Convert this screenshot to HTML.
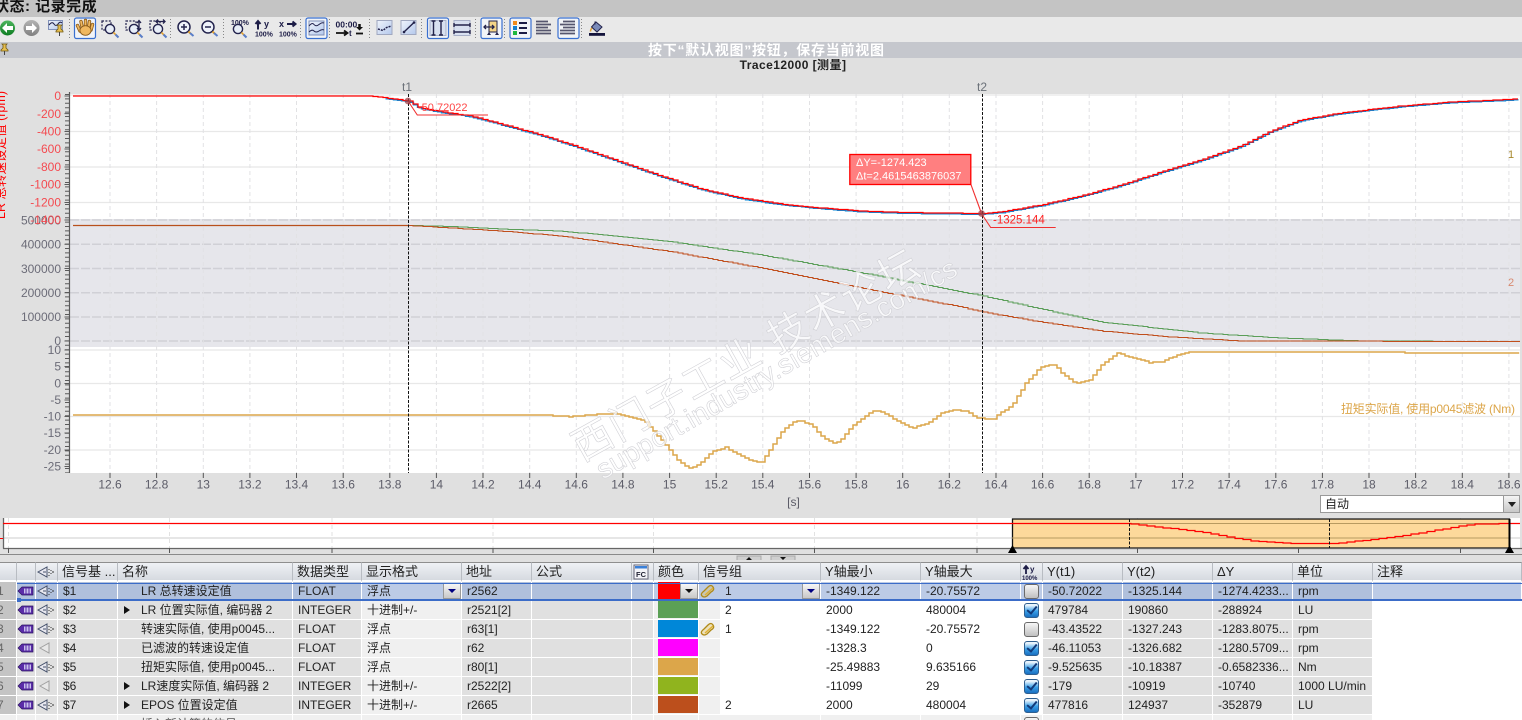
<!DOCTYPE html>
<html lang="zh"><head><meta charset="utf-8"><title>Trace</title>
<style>
html,body{margin:0;padding:0;width:1522px;height:720px;overflow:hidden;background:#e0e0e0;font-family:"Liberation Sans","Noto Sans CJK SC",sans-serif;font-size:12px;color:#222}
#wrap{position:absolute;left:0;top:0;width:1522px;height:720px;overflow:hidden;background:#e0e0e0}
.a{position:absolute}
#top{left:0;top:0;width:1522px;height:17px;background:#c4c4c4;overflow:hidden;font-size:15px;font-weight:bold;color:#111;line-height:13px;white-space:pre;letter-spacing:.5px}
#top span{position:absolute;left:-6px;top:0}
#tb{left:0;top:17px;width:1522px;height:25px;background:#e9e9e9}
#bar{left:0;top:42px;width:1522px;height:16px;background:#c5c7cd;color:#fff;font-weight:bold;font-size:14px;line-height:16px;overflow:hidden}
#bar span{position:absolute;left:648px;top:0;white-space:nowrap;letter-spacing:.75px}
#title{left:593px;top:58px;width:400px;text-align:center;font-weight:bold;font-size:12px;line-height:14px;color:#222;letter-spacing:.45px}
svg{position:absolute;left:0;top:0}
svg text{font-family:"Liberation Sans","Noto Sans CJK SC",sans-serif}
#dd{left:1320px;top:495px;width:198px;height:16px;background:#fff;border:1px solid #9a9a9a;line-height:16px;text-indent:4px}
#dd i{position:absolute;right:0;top:0;width:15px;height:16px;background:linear-gradient(#f4f4f4,#c8c8c8);border-left:1px solid #999}
#dd i:after{content:"";position:absolute;left:4px;top:6px;border:4px solid transparent;border-top:5px solid #222;border-bottom:0}
table{position:absolute;left:0;top:562px;border-collapse:separate;border-spacing:0;table-layout:fixed;width:1522px}
th,td{padding:0;overflow:hidden;white-space:nowrap;border-right:1px solid #fff;border-bottom:1px solid #fff;font-weight:normal;text-align:left;box-sizing:border-box;position:relative}
th{height:20px;line-height:15px;background:linear-gradient(#eff1f5,#d6dae0);border-top:1px solid #8e8e8e;border-right:1px solid #b8bcc2;border-bottom:2px solid #fff;font-size:13px;padding-left:4px;color:#222}
td{height:19px;background:#e0e0e0;padding-left:5px;line-height:18px}
td.e{background:#f0f0f0}
td.w{background:#fff}
td.h{background:#c4c4c4;color:#666;padding:0;text-indent:-3px}
td.g{background:linear-gradient(90deg,#f0f0f0 21px,#fff 21px);padding-left:26px}
td.n{padding-left:23px}
tr.s td{background:#b0c0dc}
tr.s td.e,tr.s td.w,tr.s td.g{background:#bccbe6}
tr.s td.h{background:#c4c4c4}
tr.l td{background:#f0f0f0;color:#555}
.sw{position:absolute;left:4px;top:0;width:40px;height:17px}
.btn{position:absolute;right:0;top:1px;width:18px;height:16px;background:linear-gradient(#f6f6f6,#c8c8c8);border:1px solid #999;box-sizing:border-box}
.btn:after{content:"";position:absolute;left:4px;top:5px;border:4px solid transparent;border-top:4px solid #000080;border-bottom:0}
.btn.k:after{border-top-color:#111}
.cb{position:absolute;left:3px;top:2px;width:15px;height:15px;border:1px solid #6a6a6a;border-radius:3px;box-sizing:border-box;background:linear-gradient(#f6f6f6,#c0c0c0)}
.cb.c{border-color:#2f5f8f;background:linear-gradient(#eaf4fc 10%,#3aa0e8 55%,#1a6fc0)}
.cb.c:after{content:"";position:absolute;left:4px;top:0;width:4px;height:8px;border-right:2.5px solid #123a7a;border-bottom:2.5px solid #123a7a;transform:rotate(40deg)}
.tri{position:absolute;left:6px;top:5px;border-left:6px solid #111;border-top:4px solid transparent;border-bottom:4px solid transparent}
#sel{left:17px;top:583px;width:1505px;height:18px;border-top:1px solid #3b6cc8;border-bottom:2px solid #3b6cc8;box-sizing:border-box}
#sq{left:17px;top:598px;width:4px;height:4px;background:#3b6cc8}
</style></head><body>
<div id="wrap">
<div class="a" id="top"><span>状态: 记录完成</span></div>
<div class="a" id="tb"></div>
<div class="a" id="bar"><span>按下“默认视图”按钮，保存当前视图</span></div>
<div class="a" id="title">Trace12000 [测量]</div>

<svg width="1522" height="560" viewBox="0 0 1522 560">
<defs>
<g id="mag"><circle cx="0" cy="0" r="4.6" fill="#e8eef8" stroke="#24244e" stroke-width="1.4"/><path d="M3.4 3.4L8 8" stroke="#e0a030" stroke-width="1.6"/><path d="M5.5 5.5L8.5 8.5" stroke="#5a7ec8" stroke-width="2"/></g>
<g id="pin"><path d="M-2.5-5h5l-1 1v3l2 2v1h-7v-1l2-2v-3z" fill="#e8c050" stroke="#705810" stroke-width=".8"/><path d="M0 2v4" stroke="#444" stroke-width="1"/></g>
<linearGradient id="gb" x1="0" y1="0" x2="1" y2="1"><stop offset="0" stop-color="#f0f4fc"/><stop offset="1" stop-color="#b4c8ec"/></linearGradient>
<linearGradient id="gg" x1="0" y1="0" x2="0" y2="1"><stop offset="0" stop-color="#50b860"/><stop offset="1" stop-color="#0c7a20"/></linearGradient>
<linearGradient id="gy" x1="0" y1="0" x2="0" y2="1"><stop offset="0" stop-color="#b4b4b4"/><stop offset="1" stop-color="#808080"/></linearGradient>
</defs>

<!-- toolbar separators -->
<path d="M69.5 19V40M170.5 19V40M223.5 19V40M300.5 19V40M329.5 19V40M369.5 19V40M421.5 19V40M475.5 19V40M504.5 19V40M581.5 19V40" stroke="#888" stroke-width="1" stroke-dasharray="1 2"/>
<!-- selected boxes -->
<g fill="#f2f4f8" stroke="#3a70d0" stroke-width="1.2"><rect x="74.5" y="18" width="21" height="20.5" rx="2"/><rect x="306" y="18" width="21" height="20.5" rx="2"/><rect x="427.5" y="18" width="21" height="20.5" rx="2"/><rect x="481" y="18" width="21" height="20.5" rx="2"/><rect x="510" y="18" width="21" height="20.5" rx="2"/><rect x="558" y="18" width="21" height="20.5" rx="2"/></g>
<!-- back/forward -->
<circle cx="7.5" cy="28" r="8" fill="url(#gg)" stroke="#e8e8e8"/><path d="M2 28l5-5v3h6v4H7v3z" fill="#fff"/>
<circle cx="31.5" cy="28" r="8" fill="url(#gy)"/><path d="M37 28l-5-5v3h-6v4h6v3z" fill="#fff"/>
<!-- wave pin -->
<rect x="48.5" y="20.5" width="14" height="9" fill="url(#gb)" stroke="#8090b8"/><path d="M49 25q3-4 5-1t4 0 4-1" fill="none" stroke="#22224a" stroke-width="1.1"/><use href="#pin" x="59.5" y="30"/>
<!-- hand -->
<g stroke-linecap="round" fill="none"><path d="M80 31l-2.5-5.500M82.500 29l-1.500-7.500M85.500 29v-8.500M88.500 29l1-7.500M91 30l1.500-5.500" stroke="#8a5a18" stroke-width="3.400"/><path d="M80 31l-2.500-5.500M82.500 29l-1.500-7.500M85.500 29v-8.500M88.500 29l1-7.500M91 30l1.500-5.500" stroke="#f0b860" stroke-width="1.800"/></g>
<ellipse cx="85.500" cy="30.500" rx="5.600" ry="4.800" fill="#f0b860" stroke="#8a5a18" stroke-width=".9"/>
<!-- zoom tools -->
<g fill="none" stroke="#24244e" stroke-width="1.2" stroke-dasharray="2 1.4"><rect x="102" y="21" width="9" height="9"/><rect x="126" y="21" width="10" height="9"/><rect x="150" y="21" width="10" height="9"/></g>
<use href="#mag" x="110" y="29"/><use href="#mag" x="134" y="29"/><use href="#mag" x="158" y="29"/>
<path d="M139 21v9M137 23l2-2.500 2 2.500M137 28l2 2.500 2-2.500" fill="none" stroke="#24244e" stroke-width="1.300"/>
<path d="M156 21.500h9M158 19.500l-2 2 2 2M163 19.500l2 2-2 2" fill="none" stroke="#24244e" stroke-width="1.300"/>
<circle cx="184" cy="27" r="6" fill="#eef2fa" stroke="#24244e" stroke-width="1.500"/><path d="M181 27h6M184 24v6" stroke="#24244e" stroke-width="1.500"/><path d="M188.500 31.500l2 2" stroke="#e0a030" stroke-width="2"/><path d="M190 33l3.500 3" stroke="#5a7ec8" stroke-width="2"/>
<circle cx="208" cy="27" r="6" fill="#eef2fa" stroke="#24244e" stroke-width="1.500"/><path d="M205 27h6" stroke="#24244e" stroke-width="1.500"/><path d="M212.500 31.500l2 2" stroke="#e0a030" stroke-width="2"/><path d="M214 33l3.500 3" stroke="#5a7ec8" stroke-width="2"/>
<!-- 100% icons -->
<g font-weight="bold" fill="#1c1c46" font-size="7"><text x="231" y="25">100%</text><text x="255" y="36.500">100%</text><text x="279" y="36.500">100%</text><text x="264" y="27" font-size="9">y</text><text x="279" y="27" font-size="9">x</text><text x="335.500" y="27.500" font-size="8.500">00:00</text><text x="349" y="36" font-size="8">t</text></g>
<use href="#mag" x="238" y="29"/>
<path d="M258 21.500v8M255.500 24l2.500-3 2.500 3" fill="none" stroke="#1c1c46" stroke-width="2"/>
<path d="M287 24h8M292.500 21.500l3 2.500-3 2.500" fill="none" stroke="#1c1c46" stroke-width="2"/>
<!-- selected wave -->
<rect x="309" y="21" width="15" height="14" fill="url(#gb)" stroke="#8090b8"/><path d="M309 26q3-4 5-1.500t5 0 5-1.500M309 32q3-3 5-1t5 0 5-1" fill="none" stroke="#24244e" stroke-width="1"/>
<!-- time -->
<path d="M336 33h11M344 30.500l3.500 2.500-3.500 2.500" fill="none" stroke="#111" stroke-width="1.800"/>
<path d="M359.500 24v3" stroke="#111" stroke-width="2.500"/><path d="M356 27h7l-3.500 3.500z" fill="#111"/><path d="M356 33.500h7" stroke="#111" stroke-width="1.800"/>
<!-- line icons -->
<rect x="377" y="20.500" width="15" height="14" fill="url(#gb)" stroke="#a0a8c0"/><path d="M378 29l5 1.500 3.500-3 5-1.500" fill="none" stroke="#22224a" stroke-width="1.500" stroke-dasharray="2 1"/>
<rect x="401" y="20.500" width="15" height="14" fill="url(#gb)" stroke="#a0a8c0"/><path d="M404 32L414 22.500" stroke="#22224a" stroke-width="1.400"/><circle cx="404" cy="32" r="1.300" fill="#22224a"/><circle cx="414" cy="22.500" r="1.300" fill="#22224a"/>
<!-- cursor icons -->
<rect x="430" y="20.500" width="16" height="15" fill="#d8e0f0" stroke="#a8b0c8"/><path d="M433.500 21v14M441 21v14M431.500 21h4M431.500 35h4M439 21h4M439 35h4" stroke="#22224a" stroke-width="1.400"/>
<rect x="454" y="20.500" width="16" height="15" fill="#d8e0f0" stroke="#a8b0c8"/><path d="M454 25h16M454 32h16M454 23v4M470 23v4M454 30v4M470 30v4" stroke="#22224a" stroke-width="1.400"/>
<!-- box split -->
<rect x="489" y="21" width="8" height="11" fill="#f4d488" stroke="#22224a"/><path d="M484 27h10M486 25l-2 2 2 2M492 25l2 2-2 2" fill="none" stroke="#22224a" stroke-width="1.300"/><path d="M487 35l2-3 2 3zM495 35l2-3 2 3z" fill="#22224a"/>
<!-- list -->
<rect x="513" y="21" width="4" height="4" fill="#f08a1c"/><rect x="513" y="26" width="4" height="4" fill="#1480d0"/><rect x="513" y="31" width="4" height="4" fill="#20b840"/>
<path d="M519 23h8M519 28h8M519 33h8" stroke="#1c1c46" stroke-width="2"/>
<path d="M536 21.500h12M536 24.500h15M536 27.500h12M536 30.500h15M536 33.500h15" stroke="#56566e" stroke-width="1.700"/>
<path d="M563 21.500h12M560 24.500h15M563 27.500h12M560 30.500h15M560 33.500h15" stroke="#56566e" stroke-width="1.700"/>
<!-- fill bucket -->
<path d="M596 22l6 5-5 5-5.500-5z" fill="#7a8ab8" stroke="#22224a"/><path d="M595 21.500v3" stroke="#22224a"/><path d="M592 28c-1 1-1.500 2-1.500 3.500" stroke="#e0a030" fill="none" stroke-width="1.500"/><rect x="589" y="33" width="16" height="2.800" fill="#14143c"/>
<use href="#pin" x="4.500" y="49"/>

<!-- plot backgrounds -->
<rect x="70" y="94" width="1450" height="125" fill="#fff"/>
<rect x="70" y="219" width="1450" height="128" fill="#e6e6eb"/>
<rect x="70" y="347" width="1450" height="126" fill="#fff"/>
<!-- grid -->
<path d="M70 95H1520M70 131.500H1520M70 167H1520M70 202.500H1520M70 350H1520M70 383.500H1520M70 416.500H1520M70 450H1520" stroke="#e8e8e8" stroke-width="1.200"/>
<path d="M70 220H1520M70 244.300H1520M70 268.500H1520M70 292.800H1520M70 317H1520M70 341H1520" stroke="#d0d0d6" stroke-width="1.500" stroke-dasharray="9 2"/>
<path d="M110 94V473M156.600 94V473M203.300 94V473M249.900 94V473M296.500 94V473M343.200 94V473M389.800 94V473M436.400 94V473M483 94V473M529.700 94V473M576.300 94V473M622.900 94V473M669.600 94V473M716.200 94V473M762.800 94V473M809.500 94V473M856.100 94V473M902.700 94V473M949.300 94V473M996 94V473M1042.600 94V473M1089.200 94V473M1135.900 94V473M1182.500 94V473M1229.100 94V473M1275.800 94V473M1322.400 94V473M1369 94V473M1415.600 94V473M1462.300 94V473M1508.900 94V473" stroke="#e2e2e4" stroke-width="1" stroke-dasharray="4 3"/>
<path d="M110 473V478M156.600 473V478M203.300 473V478M249.900 473V478M296.500 473V478M343.200 473V478M389.800 473V478M436.400 473V478M483 473V478M529.700 473V478M576.300 473V478M622.900 473V478M669.600 473V478M716.200 473V478M762.800 473V478M809.500 473V478M856.100 473V478M902.700 473V478M949.300 473V478M996 473V478M1042.600 473V478M1089.200 473V478M1135.900 473V478M1182.500 473V478M1229.100 473V478M1275.800 473V478M1322.400 473V478M1369 473V478M1415.600 473V478M1462.300 473V478M1508.900 473V478" stroke="#555"/>
<!-- y axis -->
<path d="M69.500 92V473" stroke="#5a5a5a" stroke-width="1.200"/>
<path d="M67 94V473" stroke="#5a5a5a" stroke-width="4" stroke-dasharray="1 3.400"/>
<path d="M64.500 96H70M64.500 113.600H70M64.500 131.500H70M64.500 149H70M64.500 167H70M64.500 184.500H70M64.500 202.500H70M64.500 220H70M64.500 244.300H70M64.500 268.500H70M64.500 292.800H70M64.500 317H70M64.500 341H70M64.500 350H70M64.500 366.500H70M64.500 383.500H70M64.500 400H70M64.500 416.500H70M64.500 433H70M64.500 450H70M64.500 466.500H70" stroke="#5a5a5a"/>
<g font-size="12" text-anchor="end" fill="#6c6c78"><text x="61" y="224.500">500000</text><text x="61" y="248.500">400000</text><text x="61" y="273">300000</text><text x="61" y="297">200000</text><text x="61" y="321">100000</text><text x="61" y="345">0</text><text x="61" y="354">10</text><text x="61" y="370.500">5</text><text x="61" y="387.500">0</text><text x="61" y="404">-5</text><text x="61" y="420.500">-10</text><text x="61" y="437">-15</text><text x="61" y="454">-20</text><text x="61" y="470.500">-25</text></g>
<g font-size="12" text-anchor="end" fill="#f44a50"><text x="61" y="100">0</text><text x="61" y="118">-200</text><text x="61" y="135.500">-400</text><text x="61" y="153">-600</text><text x="61" y="171">-800</text><text x="61" y="188.500">-1000</text><text x="61" y="206.500">-1200</text><text x="61" y="224">-1400</text></g>
<text transform="translate(5,219) rotate(-90)" font-size="12.500" fill="#f00" textLength="128">LR 总转速设定值 (rpm)</text>
<!-- x labels -->
<g font-size="12" text-anchor="middle" fill="#5c5c68"><text x="110" y="488.500">12.6</text><text x="156.600" y="488.500">12.8</text><text x="203.300" y="488.500">13</text><text x="249.900" y="488.500">13.2</text><text x="296.500" y="488.500">13.4</text><text x="343.200" y="488.500">13.6</text><text x="389.800" y="488.500">13.8</text><text x="436.400" y="488.500">14</text><text x="483" y="488.500">14.2</text><text x="529.700" y="488.500">14.4</text><text x="576.300" y="488.500">14.6</text><text x="622.900" y="488.500">14.8</text><text x="669.600" y="488.500">15</text><text x="716.200" y="488.500">15.2</text><text x="762.800" y="488.500">15.4</text><text x="809.500" y="488.500">15.6</text><text x="856.100" y="488.500">15.8</text><text x="902.700" y="488.500">16</text><text x="949.300" y="488.500">16.2</text><text x="996" y="488.500">16.4</text><text x="1042.600" y="488.500">16.6</text><text x="1089.200" y="488.500">16.8</text><text x="1135.900" y="488.500">17</text><text x="1182.500" y="488.500">17.2</text><text x="1229.100" y="488.500">17.4</text><text x="1275.800" y="488.500">17.6</text><text x="1322.400" y="488.500">17.8</text><text x="1369" y="488.500">18</text><text x="1415.600" y="488.500">18.2</text><text x="1462.300" y="488.500">18.4</text><text x="1508.900" y="488.500">18.6</text><text x="793.500" y="506">[s]</text></g>
<!-- curves -->
<g fill="none">
<path id="cg" stroke="#5a9e58" stroke-width="1.100"/>
<path id="cb" stroke="#0a88d8" stroke-width="1.400"/>
<path id="cr" stroke="#f00" stroke-width="1.300"/>
<path id="co" stroke="#c04e1c" stroke-width="1.100"/>
<path id="ct" stroke="#dca64a" stroke-width="1.500"/>
</g>
<path d="M73 225.500H408" stroke="#b8501c" stroke-width="1.200"/>
<!-- watermark -->
<g fill="#fff" fill-opacity=".72" stroke="#cfcfd4" stroke-width=".55">
<text transform="translate(582,462) rotate(-29)" font-size="40" letter-spacing="2">西门子工业 技术论坛</text>
<text transform="translate(603,480) rotate(-30)" font-size="28" letter-spacing=".2">support.industry.siemens.com/cs</text>
</g>
<!-- cursors -->
<path d="M408.500 94V473M982.500 94V473" stroke="#111" stroke-width="1" stroke-dasharray="3 1.500"/>
<text x="407" y="91" font-size="12" text-anchor="middle" fill="#6a7078">t1</text>
<text x="982" y="91" font-size="12" text-anchor="middle" fill="#6a7078">t2</text>
<path d="M408 101L417.300 115H488M981.700 214L990.700 227.500H1055.700M971 184.700L981.700 214" fill="none" stroke="#f03030" stroke-width="1.100"/>
<circle cx="408" cy="101" r="3.400" fill="#a04048" fill-opacity=".75"/><circle cx="981.500" cy="213.500" r="3.400" fill="#a04048" fill-opacity=".75"/>
<text x="418" y="111" font-size="11" fill="#f44">-50.72022</text>
<text x="993" y="223.500" font-size="11.500" fill="#f22">-1325.144</text>
<rect x="849.800" y="154.500" width="121" height="30" fill="#ff7f80" stroke="#f00" stroke-width="1.300"/>
<text x="856" y="166" font-size="11" fill="#fff">ΔY=-1274.423</text>
<text x="856" y="179.500" font-size="11" fill="#fff">Δt=2.4615463876037</text>
<text x="1511" y="158" font-size="11" fill="#a8882c" text-anchor="middle">1</text>
<text x="1511" y="286" font-size="11" fill="#d88a70" text-anchor="middle">2</text>
<text x="1341" y="413" font-size="12" fill="#dca64a" textLength="174">扭矩实际值, 使用p0045滤波 (Nm)</text>

<!-- overview -->
<rect x="3" y="518" width="1517" height="30.500" fill="#fff"/>
<path d="M3 538H1520" stroke="#e6e6e6" stroke-width="2"/>
<path d="M8.500 518V548M169.500 518V548M332 518V548M493 518V548M653.500 518V548M814.500 518V548M977 518V548M1137.500 518V548M1298.500 518V548M1460.500 518V548" stroke="#e2e2e2" stroke-dasharray="4 3"/>
<rect x="1012.500" y="519" width="497" height="29" fill="#fdd99b" stroke="#111" stroke-width="1.300"/>
<path d="M1012 523.500H1510M1012 538H1510" stroke="#b89a60" stroke-width="1"/>
<path d="M3.500 518V548.500M3 548.500H1522" stroke="#666" stroke-width="1.300"/>
<path d="M8.500 548V553M169.500 548V553M332 548V553M493 548V553M653.500 548V553M814.500 548V553M977 548V553M1137.500 548V553M1298.500 548V553M1460.500 548V553" stroke="#555"/>
<path d="M0 554.500H1522" stroke="#8a8a8a"/>
<path d="M0 538.500H3" stroke="#f00"/>
<path id="cv" fill="none" stroke="#f00" stroke-width="1.200"/>
<path d="M1129.500 519V548M1329.500 519V548" stroke="#111" stroke-dasharray="3 1.500"/>
<path d="M1008 553l4.500-8 4.500 8zM1505 553l4.500-8 4.500 8z" fill="#000"/>
<path d="M1509.500 519V549" stroke="#000" stroke-width="2"/>
<rect x="737" y="556" width="24" height="5" fill="#cfcfcf" stroke="#aaa"/><rect x="771" y="556" width="24" height="5" fill="#cfcfcf" stroke="#aaa"/>
<path d="M746 560l3-3 3 3zM780 557l3 3 3-3z" fill="#111"/>
</svg>

<div class="a" id="dd">自动<i></i></div>

<table>
<colgroup><col style="width:17px"><col style="width:19px"><col style="width:22px"><col style="width:60px"><col style="width:175px"><col style="width:69px"><col style="width:100px"><col style="width:70px"><col style="width:100px"><col style="width:22px"><col style="width:45px"><col style="width:122px"><col style="width:100px"><col style="width:100px"><col style="width:22px"><col style="width:80px"><col style="width:90px"><col style="width:80px"><col style="width:80px"><col style="width:149px"></colgroup>
<tr><th></th><th></th><th></th><th>信号基 ...</th><th>名称</th><th>数据类型</th><th>显示格式</th><th>地址</th><th>公式</th><th></th><th>颜色</th><th>信号组</th><th>Y轴最小</th><th>Y轴最大</th><th></th><th>Y(t1)</th><th>Y(t2)</th><th>ΔY</th><th>单位</th><th>注释</th></tr>
<tr class="s"><td class="h">1</td><td></td><td></td><td>$1</td><td class="n">LR 总转速设定值</td><td>FLOAT</td><td class="e">浮点<span class="btn"></span></td><td>r2562</td><td></td><td></td><td class="e"><span class="sw" style="background:#f00;width:22px"></span><span class="btn k"></span></td><td class="g">1<span class="btn"></span></td><td class="w">-1349.122</td><td class="w">-20.75572</td><td class="w"><span class="cb"></span></td><td>-50.72022</td><td>-1325.144</td><td>-1274.4233...</td><td>rpm</td><td class="w"></td></tr>
<tr><td class="h">2</td><td></td><td></td><td>$2</td><td class="n"><span class="tri"></span>LR 位置实际值, 编码器 2</td><td>INTEGER</td><td class="e">十进制+/-</td><td>r2521[2]</td><td></td><td></td><td class="e"><span class="sw" style="background:#5ba055"></span></td><td class="g">2</td><td class="w">2000</td><td class="w">480004</td><td class="w"><span class="cb c"></span></td><td>479784</td><td>190860</td><td>-288924</td><td>LU</td><td class="w"></td></tr>
<tr><td class="h">3</td><td></td><td></td><td>$3</td><td class="n">转速实际值, 使用p0045...</td><td>FLOAT</td><td class="e">浮点</td><td>r63[1]</td><td></td><td></td><td class="e"><span class="sw" style="background:#0087d8"></span></td><td class="g">1</td><td class="w">-1349.122</td><td class="w">-20.75572</td><td class="w"><span class="cb"></span></td><td>-43.43522</td><td>-1327.243</td><td>-1283.8075...</td><td>rpm</td><td class="w"></td></tr>
<tr><td class="h">4</td><td></td><td></td><td>$4</td><td class="n">已滤波的转速设定值</td><td>FLOAT</td><td class="e">浮点</td><td>r62</td><td></td><td></td><td class="e"><span class="sw" style="background:#f0f"></span></td><td class="g"></td><td class="w">-1328.3</td><td class="w">0</td><td class="w"><span class="cb c"></span></td><td>-46.11053</td><td>-1326.682</td><td>-1280.5709...</td><td>rpm</td><td class="w"></td></tr>
<tr><td class="h">5</td><td></td><td></td><td>$5</td><td class="n">扭矩实际值, 使用p0045...</td><td>FLOAT</td><td class="e">浮点</td><td>r80[1]</td><td></td><td></td><td class="e"><span class="sw" style="background:#dca64a"></span></td><td class="g"></td><td class="w">-25.49883</td><td class="w">9.635166</td><td class="w"><span class="cb c"></span></td><td>-9.525635</td><td>-10.18387</td><td>-0.6582336...</td><td>Nm</td><td class="w"></td></tr>
<tr><td class="h">6</td><td></td><td></td><td>$6</td><td class="n"><span class="tri"></span>LR速度实际值, 编码器 2</td><td>INTEGER</td><td class="e">十进制+/-</td><td>r2522[2]</td><td></td><td></td><td class="e"><span class="sw" style="background:#90b41e"></span></td><td class="g"></td><td class="w">-11099</td><td class="w">29</td><td class="w"><span class="cb c"></span></td><td>-179</td><td>-10919</td><td>-10740</td><td>1000 LU/min</td><td class="w"></td></tr>
<tr><td class="h">7</td><td></td><td></td><td>$7</td><td class="n"><span class="tri"></span>EPOS 位置设定值</td><td>INTEGER</td><td class="e">十进制+/-</td><td>r2665</td><td></td><td></td><td class="e"><span class="sw" style="background:#bc4f1c"></span></td><td class="g">2</td><td class="w">2000</td><td class="w">480004</td><td class="w"><span class="cb c"></span></td><td>477816</td><td>124937</td><td>-352879</td><td>LU</td><td class="w"></td></tr>
<tr class="l"><td class="h"></td><td></td><td></td><td></td><td class="n">插入新计算的信号</td><td></td><td></td><td></td><td></td><td></td><td></td><td></td><td></td><td></td><td><span class="cb" style="top:2px"></span></td><td></td><td></td><td></td><td></td><td style="background:#fff"></td></tr>
</table>

<div class="a" id="sel"></div><div class="a" id="sq"></div>

<svg width="1522" height="720" viewBox="0 0 1522 720" style="pointer-events:none">
<defs><g id="tag"><path d="M0 0l4-4h11v8H4z" fill="#5a2ca8" stroke="#2c1460" stroke-width=".7"/><rect x="6" y="-2.500" width="7" height="5" fill="#c8c0ec"/><path d="M8 -2.500v5M11 -2.500v5" stroke="#5a2ca8" stroke-width="1"/></g>
<g id="spk"><path d="M0 0l9-5v10z" fill="#e8e8f0" stroke="#44506a" stroke-width="1"/><path d="M5 0h3" stroke="#44506a"/><path d="M11-3v1M11 0v1M11 3v1M13-2v1M13 1v1M15-1v2" stroke="#333" stroke-width="1"/></g>
<g id="spo"><path d="M0 0l9-5v10z" fill="#e8e8e8" stroke="#a0a0a0" stroke-width="1"/></g>
<g id="lnk"><path d="M0 4L4 0q3-3 5 0t-2 5l-4 4q-3 2-5 0t2-5z" fill="#e8c040" fill-opacity=".3" stroke="#b08a18" stroke-width="1.300" transform="translate(2,-4)"/><path d="M0 0L8-7" stroke="#e0b030" stroke-width="1.400" transform="translate(3,4)"/></g></defs>
<use href="#spk" x="38" y="572"/>
<use href="#tag" x="18" y="591"/><use href="#tag" x="18" y="610"/><use href="#tag" x="18" y="629"/><use href="#tag" x="18" y="648"/><use href="#tag" x="18" y="667"/><use href="#tag" x="18" y="686"/><use href="#tag" x="18" y="705"/>
<use href="#spk" x="38" y="591"/><use href="#spk" x="38" y="610"/><use href="#spk" x="38" y="629"/><use href="#spo" x="40" y="648"/><use href="#spk" x="38" y="667"/><use href="#spo" x="40" y="686"/><use href="#spk" x="38" y="705"/>
<use href="#lnk" x="702" y="591"/><use href="#lnk" x="702" y="629"/>
<!-- FC header icon -->
<rect x="634" y="565" width="14" height="14" fill="#f4f4f8" stroke="#667"/><rect x="635" y="566" width="12" height="2.500" fill="#3a80d8"/><text x="636" y="577" font-size="7.500" font-weight="bold" fill="#223">FC</text>
<!-- y100 header icon -->
<path d="M1026 574v-8M1023.500 569l2.500-3 2.500 3" fill="none" stroke="#1c1c46" stroke-width="1.800"/>
<text x="1030" y="572" font-size="8" font-weight="bold" fill="#1c1c46">y</text>
<text x="1022" y="580" font-size="6" font-weight="bold" fill="#1c1c46">100%</text>
</svg>
</div>

<script>
function X(p,fx,fy){return p.map(function(q){return [fx(q[0]),fy(q[1])]})}
function val(p,x){for(var i=1;i<p.length;i++){if(x<=p[i][0]){var a=p[i-1],b=p[i];return a[1]+(b[1]-a[1])*(x-a[0])/((b[0]-a[0])||1)}}return p[p.length-1][1]}
function step(p,dx,ox,oy,r){r=r||2;var x=p[0][0],e=p[p.length-1][0],d="M"+(x+ox)+" "+(Math.round(val(p,x)*r)/r+oy);while(x<e){var nx=Math.min(x+dx,e),y=Math.round(val(p,nx)*r)/r+oy;d+="H"+(nx+ox).toFixed(1)+"V"+y;x=nx}return d}
var red=[[73,96],[370,96],[385,98],[408,101],[420,108],[445,112.500],[470,116],[500,124],[540,135],[580,148],[620,162],[660,176],[700,189],[740,198],[780,204],[820,208],[860,211],[900,212.500],[980,213.500],[1000,212],[1040,205],[1080,196],[1120,185],[1160,172],[1200,160],[1240,146],[1270,131],[1300,120],[1340,113],[1400,106],[1450,102],[1518,99]];
document.getElementById("cr").setAttribute("d",step(red,5,0,0));
document.getElementById("cb").setAttribute("d",step(red.slice(2),4,0.500,0.800));
var gr=[[408,225.500],[450,226.500],[500,229],[560,231],[670,241.700],[760,255],[860,272.700],[960,291.700],[982,296],[1040,309],[1100,322],[1200,333],[1280,338],[1360,341],[1500,341.500]];
document.getElementById("cg").setAttribute("d",step(gr,5,0,0));
var or=[[408,225.500],[450,228],[500,231],[560,236],[670,251.700],[760,268],[860,288],[960,307],[982,312],[1040,322],[1100,331],[1170,337],[1240,341],[1520,341.500]];
document.getElementById("co").setAttribute("d",step(or,5,0,0));
var t1=[[0,226],[90,224],[170,228],[190,230],[250,225],[320,220],[350,228],[400,240],[430,275],[470,325],[500,365],[530,385],[560,370],[590,335],[630,322],[660,340],[700,362],[730,366],[760,320],[790,270],[820,245],[840,241],[870,255],[900,290],[930,310],[950,305],[980,262],[1010,238],[1040,215],[1060,211],[1090,230],[1150,265],[1200,248],[1230,222],[1270,208],[1310,215],[1330,232],[1370,238]];
var t2=[[45,235],[50,222],[90,198],[130,130],[170,85],[190,76],[215,76],[240,105],[275,130],[315,120],[350,75],[395,40],[440,52],[490,68],[520,66],[590,38],[640,35],[700,35],[1000,36],[1300,38],[1560,38]];
var tq=[[73,415],[500,415]].concat(X(t1,function(v){return 500+v/2.8},function(v){return 340+v/3})).concat(X(t2,function(v){return 980+v/2.893},function(v){return 340+v/3}));
document.getElementById("ct").setAttribute("d",step(tq,4,0,0,1));
var ov=[[3,523.500],[1125,523.500],[1200,532],[1250,541],[1290,543.500],[1335,543.500],[1400,536],[1460,526],[1475,524],[1520,523.500]];
document.getElementById("cv").setAttribute("d",step(ov,8,0,0));
</script>
</body></html>
